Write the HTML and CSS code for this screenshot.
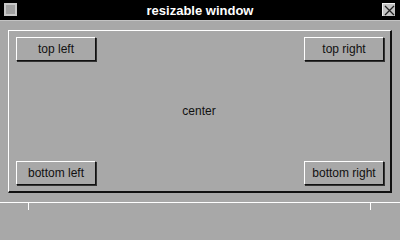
FILE: index.html
```html
<!DOCTYPE html>
<html>
<head>
<meta charset="utf-8">
<link rel="stylesheet" href="styles.css">
</head>
<body>
<div class="window">
  <div class="titlebar">
    <div class="menu-btn"><div class="menu-inner"></div></div>
    <div class="title">resizable window</div>
    <div class="close-btn">
      <svg width="11" height="11" viewBox="0 0 11 11"><path d="M1 1L10 10M10 1L1 10" stroke="#222" stroke-width="1.3" fill="none"/></svg>
    </div>
  </div>
  <div class="content">
    <div class="frame">
      <div class="row">
        <div class="btn">top left</div>
        <div class="btn">top right</div>
      </div>
      <div class="center">center</div>
      <div class="row">
        <div class="btn">bottom left</div>
        <div class="btn">bottom right</div>
      </div>
    </div>
  </div>
  <div class="status">
    <div class="cell cell-a"></div>
    <div class="cell cell-b"></div>
    <div class="cell cell-c"></div>
  </div>
</div>
</body>
</html>
```
FILE: styles.css
```css
html, body {
  margin: 0;
  padding: 0;
  background: #a8a8a8;
}
.window {
  width: 400px;
  height: 210px;
  display: flex;
  flex-direction: column;
  font-family: "Liberation Sans", Arial, sans-serif;
  overflow: hidden;
}
.titlebar {
  flex-shrink: 0;
  height: 20px;
  background: #000;
  border-bottom: 1px solid #c4c4c4;
  display: flex;
  align-items: center;
  padding: 0 5px 0 4px;
  box-sizing: content-box;
}
.menu-btn {
  width: 9px;
  height: 9px;
  border: 2px solid #c8c8c8;
  background: #a0a0a0;
  margin-top: -1px;
}
.title {
  flex: 1;
  text-align: center;
  color: #fff;
  font-weight: bold;
  font-size: 13px;
  margin-left: 1px;
}
.close-btn {
  width: 12px;
  height: 12px;
  background: #c4c4c4;
  border-top: 1px solid #eee;
  border-left: 1px solid #eee;
  display: flex;
  align-items: center;
  justify-content: center;
  margin-top: -1px;
}
.content {
  flex-shrink: 0;
  padding: 9px 8px 9px 8px;
}
.frame {
  height: 148px;
  border-top: 1px solid #fff;
  border-left: 1px solid #fff;
  border-right: 2px solid #111;
  border-bottom: 2px solid #111;
  padding: 6px 6px 6px 7px;
  display: flex;
  flex-direction: column;
  justify-content: space-between;
  box-sizing: content-box;
}
.row {
  display: flex;
  justify-content: space-between;
}
.btn {
  width: 78px;
  height: 22px;
  border-top: 1px solid #fff;
  border-left: 1px solid #fff;
  border-right: 1px solid #111;
  border-bottom: 1px solid #111;
  box-shadow: 1px 1px 0 #333;
  display: flex;
  align-items: center;
  justify-content: center;
  font-size: 12px;
  color: #111;
}
.center {
  text-align: center;
  font-size: 12px;
  color: #111;
  margin-left: -2px;
}
.status {
  flex: 1;
  border-top: 1px solid #fff;
  display: flex;
}
.cell-a {
  width: 28px;
}
.cell-b {
  width: 341px;
  border-left: 1px solid #fff;
}
.cell-c {
  flex: 1;
  border-left: 1px solid #fff;
}
```
